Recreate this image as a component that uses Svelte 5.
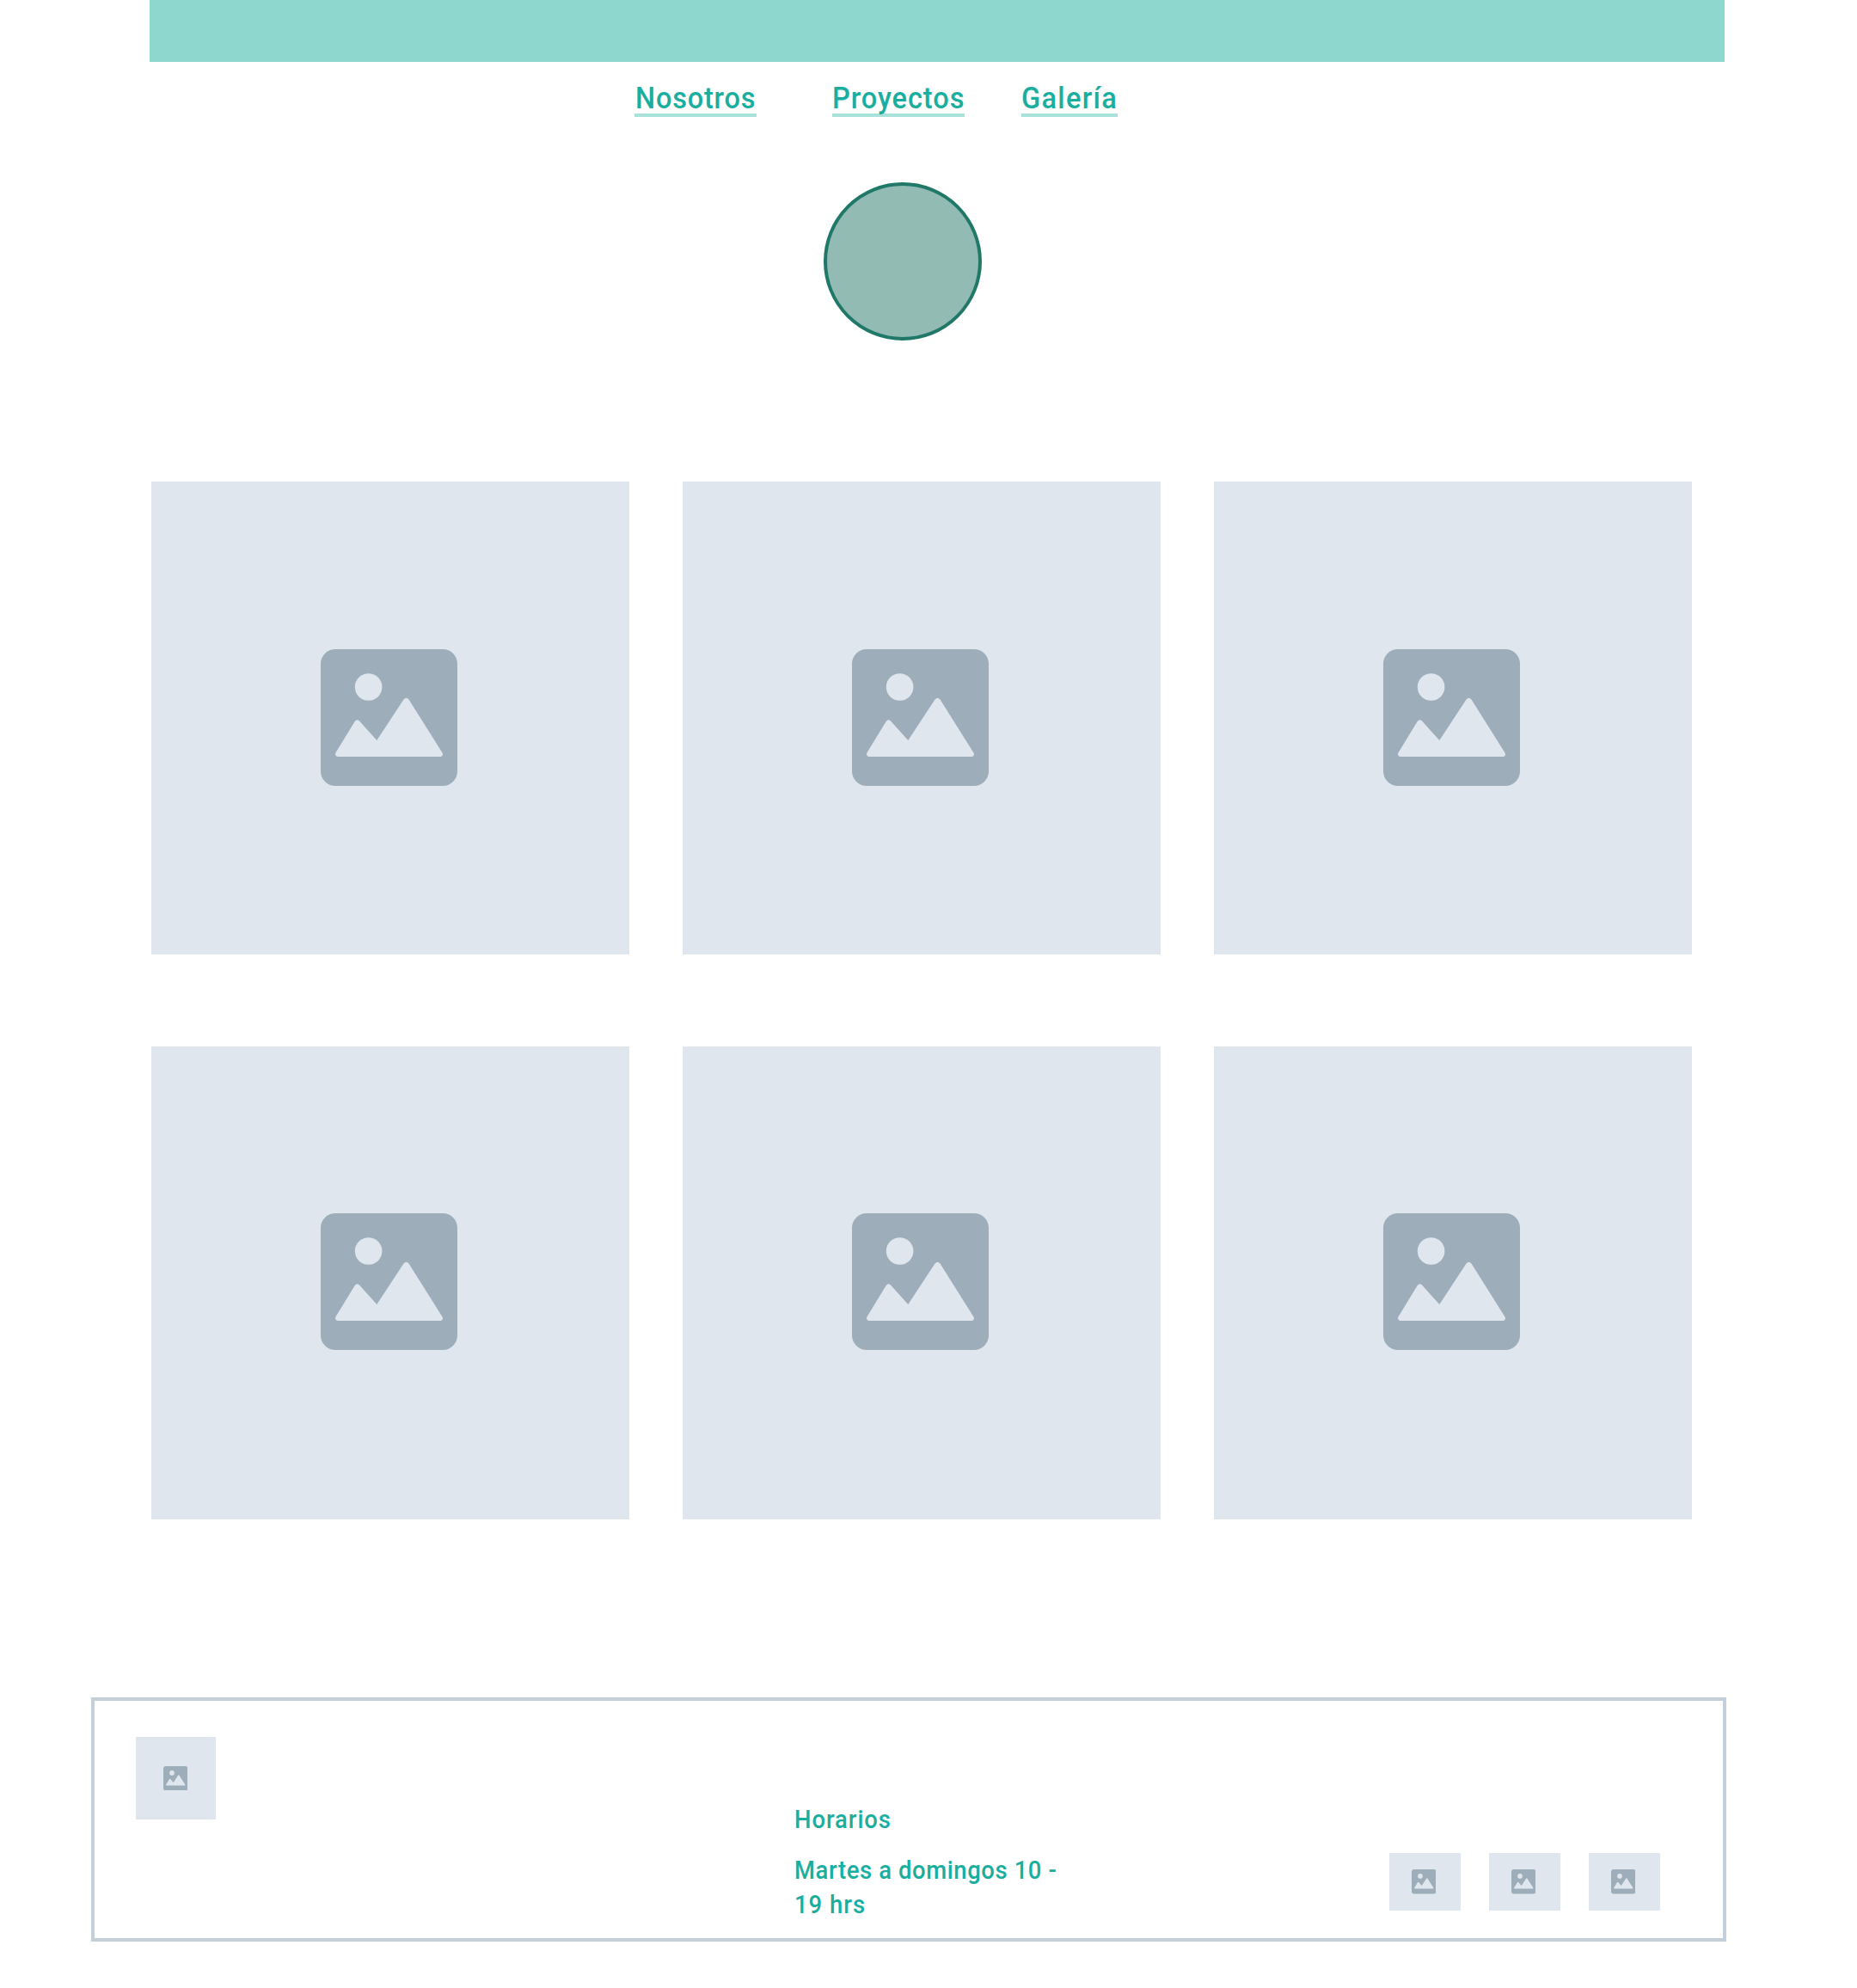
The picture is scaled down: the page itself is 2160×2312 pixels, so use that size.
<script>
  const links = [
    { label: 'Nosotros', cls: 'about' },
    { label: 'Proyectos', cls: 'projects' },
    { label: 'Galería', cls: 'gallery-link' }
  ];
  const cards = [1, 2, 3, 4, 5, 6];
  const thumbs = [1, 2, 3];
</script>

{#snippet picture()}
  <svg class="picture" viewBox="0 0 159 159" aria-hidden="true">
    <rect class="frame" width="159" height="159" rx="17" />
    <circle class="cut" cx="55.6" cy="44" r="15.8" />
    <path class="cut" d="M19.5 125H140Q143 123.5 141.5 120.5L102.5 58.5Q99.5 55 96.5 58.5L65.3 106L45 83.5Q42.3 81 39.7 84L17.4 120.5Q16 124 19.5 125Z" />
  </svg>
{/snippet}

<div class="page">
  <div class="banner"></div>
  <nav>
    {#each links as link}
      <a class={link.cls} href="#top"><span>{link.label}</span></a>
    {/each}
  </nav>
  <div class="avatar"></div>
  <main>
    {#each cards as card (card)}
      <div class="card">{@render picture()}</div>
    {/each}
  </main>
  <footer>
    <div class="logo">{@render picture()}</div>
    <div class="hours">
      <p><span class="title">Horarios</span></p>
      <p class="times"><span class="days">Martes a domingos 10 -</span><br /><span class="end">19 hrs</span></p>
    </div>
    <div class="thumbs">
      {#each thumbs as thumb (thumb)}
        <div class="thumb">{@render picture()}</div>
      {/each}
    </div>
  </footer>
</div>

<style>
  :global(body) { background: #fff; }
  .page {
    box-sizing: border-box;
    width: 2160px;
    height: 2312px;
    overflow: hidden;
    font-family: Roboto, "Liberation Sans", sans-serif;
    font-weight: 500;
    color: #1aae9f;
  }
  .banner { width: 1832px; height: 72px; margin-left: 174px; background: #8dd7cf; }
  nav { display: flex; height: 64px; padding-left: 738px; }
  a {
    box-sizing: border-box;
    height: 64px;
    padding: 22px 0 0 1px;
    border-bottom: 4px solid #a9e1db;
    color: inherit;
    font-size: 35px;
    line-height: 41px;
    text-decoration: none;
    white-space: nowrap;
  }
  /* Slightly condensed letterforms with open tracking */
  span { display: inline-block; transform: scaleX(0.93); transform-origin: left; }
  .about { width: 142px; margin-right: 88px; letter-spacing: 0.85px; }
  .projects { width: 154px; margin-right: 66px; padding-left: 0; letter-spacing: 1px; }
  .gallery-link { width: 112px; padding-left: 0; letter-spacing: 1.4px; }
  .avatar {
    box-sizing: border-box;
    width: 184px;
    height: 184px;
    margin: 76px 0 0 958px;
    border: 4px solid #207868;
    border-radius: 50%;
    background: #91bbb3;
  }
  main {
    display: grid;
    grid-template-columns: repeat(3, 556px);
    grid-auto-rows: 550px;
    gap: 106.8px 61.75px;
    margin: 164px 0 0 176px;
  }
  .card, .logo, .thumb {
    box-sizing: border-box;
    display: flex;
    align-items: center;
    justify-content: center;
    background: #dfe6ee;
  }
  .card { padding: 0 2.2px 2px 0; }
  .picture { display: block; width: 159px; height: 159px; }
  .frame { fill: #9eadba; }
  .cut { fill: #dfe6ee; }
  footer {
    box-sizing: border-box;
    display: flex;
    width: 1902px;
    height: 284px;
    margin: 207.2px 0 0 106px;
    border: 4px solid #c3cfd9;
  }
  .logo { width: 93px; height: 96px; margin: 42px 0 0 48px; padding-right: 1px; }
  .logo :global(svg), .thumb :global(svg) { width: 28.5px; height: 28.5px; }
  .hours { width: 330px; margin: 118px 0 0 673px; font-size: 29.5px; line-height: 40px; white-space: nowrap; }
  p { margin: 0; }
  .title { letter-spacing: 1px; }
  .days { letter-spacing: 0.65px; }
  .end { letter-spacing: 1.1px; }
  .times { margin-top: 19px; }
  .thumbs { display: flex; gap: 33px; margin: 177px 0 0 362.3px; }
  .thumb { width: 83px; height: 67px; padding-right: 4px; }
</style>
